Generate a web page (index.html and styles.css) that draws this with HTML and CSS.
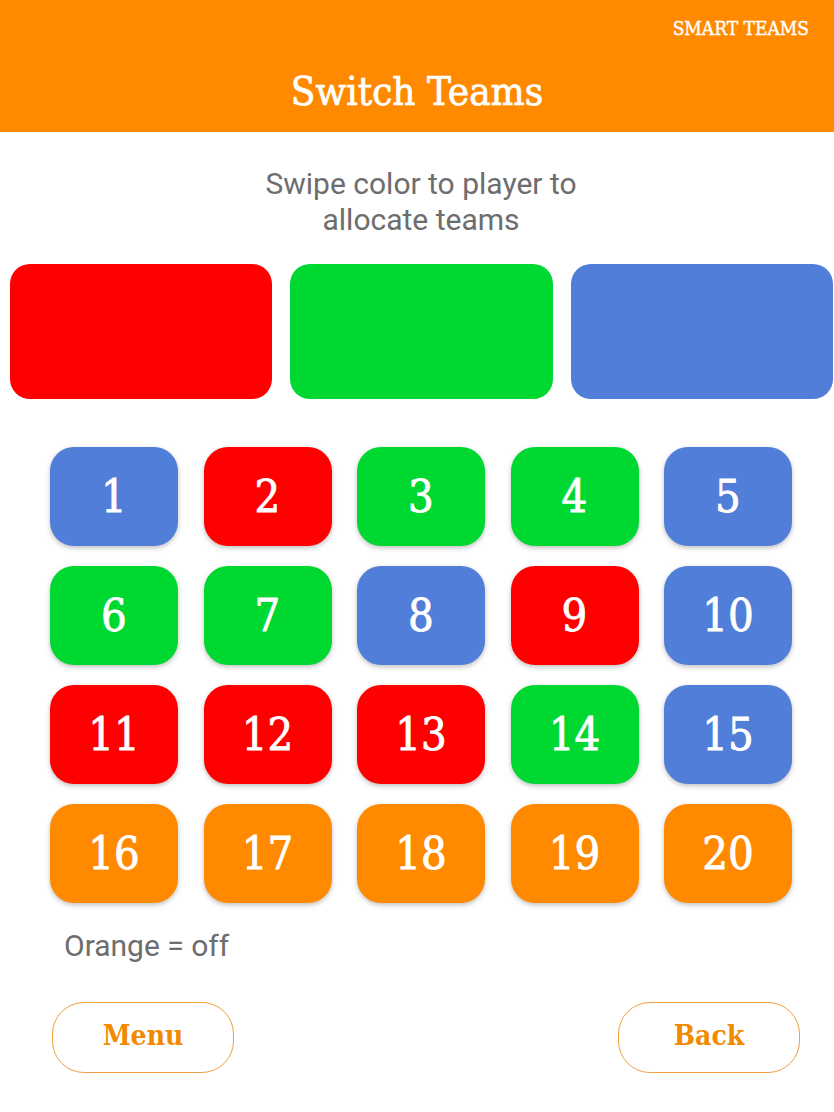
FILE: index.html
```html
<!DOCTYPE html>
<html lang="en">
<head>
<meta charset="utf-8">
<title>Switch Teams</title>
<link rel="stylesheet" href="styles.css">
</head>
<body>
<header class="topbar">
  <div class="brand">SMART TEAMS</div>
  <h1 class="title">Switch Teams</h1>
</header>
<main class="content">
  <p class="hint">Swipe color to player to<br>allocate teams</p>
  <div class="teams">
    <div class="team red"></div>
    <div class="team green"></div>
    <div class="team blue"></div>
  </div>
  <div class="players">
    <div class="player blue">1</div>
    <div class="player red">2</div>
    <div class="player green">3</div>
    <div class="player green">4</div>
    <div class="player blue">5</div>
    <div class="player green">6</div>
    <div class="player green">7</div>
    <div class="player blue">8</div>
    <div class="player red">9</div>
    <div class="player blue">10</div>
    <div class="player red">11</div>
    <div class="player red">12</div>
    <div class="player red">13</div>
    <div class="player green">14</div>
    <div class="player blue">15</div>
    <div class="player orange">16</div>
    <div class="player orange">17</div>
    <div class="player orange">18</div>
    <div class="player orange">19</div>
    <div class="player orange">20</div>
  </div>
  <p class="legend">Orange = off</p>
  <div class="actions">
    <button class="btn">Menu</button>
    <button class="btn">Back</button>
  </div>
</main>
</body>
</html>
```

FILE: styles.css
```css
* { box-sizing: border-box; }
html, body { margin: 0; padding: 0; background: #fff; }
body { width: 834px; font-family: "Roboto", "Liberation Sans", sans-serif; }

.topbar {
  background: #ff8a00;
  height: 132px;
  display: flex;
  flex-direction: column;
  padding-top: 16px;
}
.brand {
  align-self: flex-end;
  margin-right: 25px;
  color: #fff;
  font-family: "DejaVu Serif Condensed", "DejaVu Serif", serif;
  font-size: 19px;
  line-height: 24px;
  -webkit-text-stroke: 0.4px #fff;
}
.title {
  margin: 29px 0 0 0;
  color: #fff;
  text-align: center;
  font-family: "DejaVu Serif Condensed", "DejaVu Serif", serif;
  font-weight: normal;
  font-size: 40px;
  line-height: 44px;
  -webkit-text-stroke: 0.7px #fff;
}

.content { display: flex; flex-direction: column; }
.hint {
  margin: 34px 0 0 0;
  padding-left: 8px;
  text-align: center;
  color: #6d6d6d;
  font-size: 30px;
  line-height: 36px;
}
.teams {
  margin-top: 26px;
  padding: 0 1px 0 10px;
  display: grid;
  grid-template-columns: repeat(3, 1fr);
  column-gap: 18px;
}
.team { height: 135px; border-radius: 20px; }
.red { background: #ff0000; }
.green { background: #00d832; }
.blue { background: #507ed8; }
.orange { background: #ff8a00; }

.players {
  margin-top: 48px;
  padding-left: 50px;
  display: grid;
  grid-template-columns: repeat(5, 128px);
  column-gap: 25.5px;
  row-gap: 20px;
}
.player {
  height: 99px;
  border-radius: 24px;
  display: flex;
  align-items: center;
  justify-content: center;
  color: #fff;
  font-family: "DejaVu Serif Condensed", "DejaVu Serif", serif;
  font-size: 45px;
  -webkit-text-stroke: 0.8px #fff;
  box-shadow: 0 2px 5px rgba(0,0,0,0.25);
}
.legend {
  margin: 25px 0 0 64px;
  color: #6d6d6d;
  font-size: 30px;
  line-height: 36px;
}
.actions {
  margin-top: 38px;
  padding: 0 34px 0 52px;
  display: flex;
  justify-content: space-between;
}
.btn {
  width: 182px;
  height: 71px;
  border: 1px solid #f2a040;
  border-radius: 32px;
  background: #fff;
  color: #f28a00;
  font-family: "DejaVu Serif Condensed", "DejaVu Serif", serif;
  font-size: 28px;
  font-weight: bold;
  padding: 0 0 4px 0;
}
```
